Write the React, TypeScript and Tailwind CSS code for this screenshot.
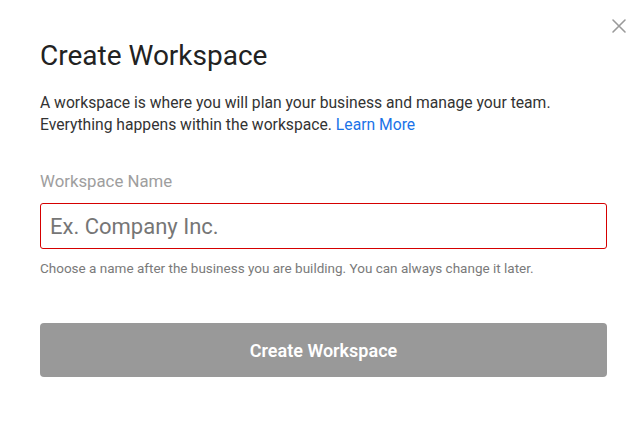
import React from "react";

export default function App() {
  return (
    <div className="relative w-[644px] h-[426px] bg-white" style={{ fontFamily: "Roboto, 'Liberation Sans', sans-serif" }}>
      <button className="absolute right-[16px] top-[17px] w-[18px] h-[18px] flex items-center justify-center">
        <svg width="16" height="16" viewBox="0 0 16 16" fill="none" stroke="#9a9a9a" strokeWidth="1.6" strokeLinecap="round">
          <path d="M2 2L14 14M14 2L2 14" />
        </svg>
      </button>
      <div className="flex flex-col pl-[40px] pr-[37px] pt-[40px]">
        <h1 className="text-[28px] leading-[32px] text-[#222] font-normal">Create Workspace</h1>
        <p className="mt-[20px] text-[15.7px] leading-[22px] text-[#333]">
          A workspace is where you will plan your business and manage your team.<br />
          Everything happens within the workspace. <a className="text-[#1a73e8]">Learn More</a>
        </p>
        <label className="mt-[34px] text-[16.8px] leading-[22px] text-[#9e9e9e]">Workspace Name</label>
        <input
          placeholder="Ex. Company Inc."
          className="mt-[11px] h-[46px] w-full rounded-[3px] border border-[#d50000] px-[9px] text-[22px] text-[#333] placeholder:text-[#767676] outline-none"
        />
        <p className="mt-[11px] text-[13.5px] leading-[16px] text-[#7a7a7a]">
          Choose a name after the business you are building. You can always change it later.
        </p>
        <button className="mt-[47px] h-[54px] w-full rounded-[4px] bg-[#999999] text-white text-[18px] font-semibold">
          Create Workspace
        </button>
      </div>
    </div>
  );
}
